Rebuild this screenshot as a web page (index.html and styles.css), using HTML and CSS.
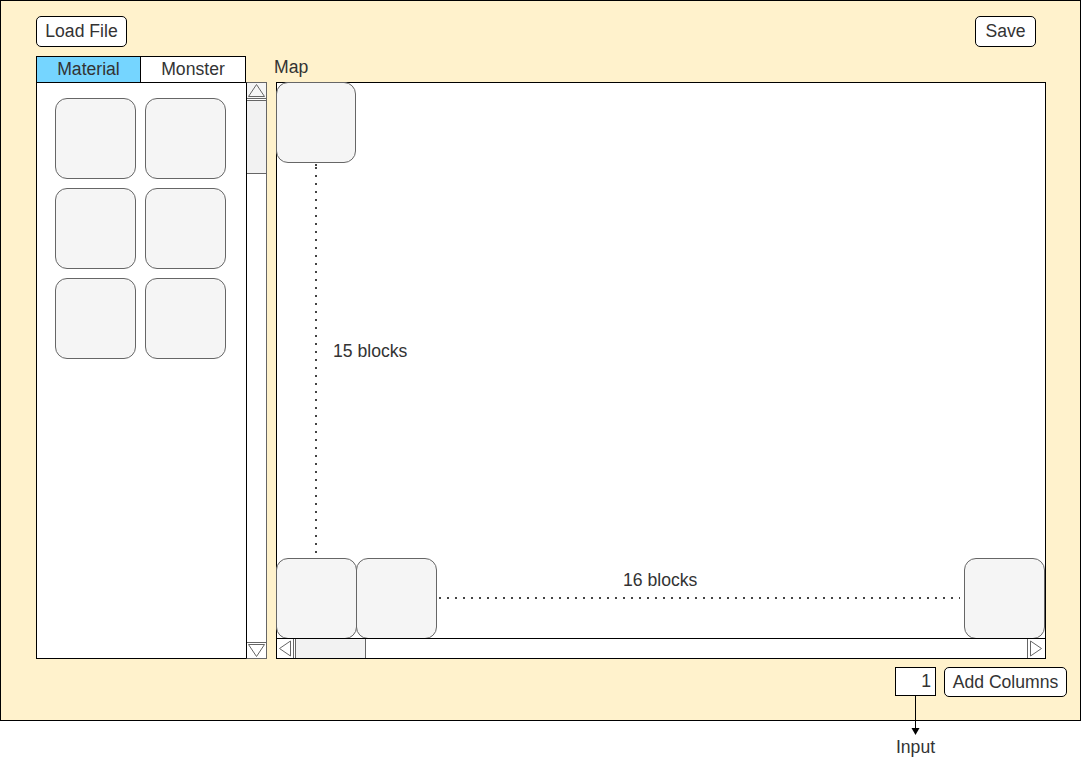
FILE: index.html
```html
<!DOCTYPE html>
<html>
<head>
<meta charset="utf-8">
<title>Map Editor</title>
<link rel="stylesheet" href="styles.css">
</head>
<body>
<div class="page">
<div class="frame">
  <div class="topbar">
    <button class="btn btn-load">Load File</button>
    <button class="btn btn-save">Save</button>
  </div>
  <div class="main">
    <div class="palette">
      <div class="tabs">
        <div class="tab active">Material</div>
        <div class="tab">Monster</div>
      </div>
      <div class="palette-body">
        <div class="tiles">
          <div class="tile"></div>
          <div class="tile"></div>
          <div class="tile"></div>
          <div class="tile"></div>
          <div class="tile"></div>
          <div class="tile"></div>
        </div>
        <div class="vscroll">
          <div class="sb-box sb-up">
            <svg width="19" height="15" viewBox="0 0 19 15"><polygon points="1.5,13.5 17.5,13.5 9.5,1.5" fill="none" stroke="#666" stroke-width="1"/></svg>
          </div>
          <div class="vthumb"></div>
          <div class="vtrack"></div>
          <div class="sb-box sb-down">
            <svg width="19" height="15" viewBox="0 0 19 15"><polygon points="1.5,1.5 17.5,1.5 9.5,13.5" fill="none" stroke="#666" stroke-width="1"/></svg>
          </div>
        </div>
      </div>
    </div>
    <div class="map-col">
      <div class="map-label">Map</div>
      <div class="map">
        <div class="tile map-top"></div>
        <div class="vspan">
          <div class="vdots"></div>
          <div class="vlabel">15 blocks</div>
        </div>
        <div class="brow">
          <div class="tile"></div>
          <div class="tile tile-second"></div>
          <div class="hspan">
            <div class="hlabel">16 blocks</div>
            <div class="hdots"></div>
          </div>
          <div class="tile"></div>
        </div>
        <div class="hscroll">
          <div class="hs-box hs-left">
            <svg width="16" height="18" viewBox="0 0 16 18"><polygon points="13.5,2 13.5,17 2.5,9.5" fill="none" stroke="#666" stroke-width="1"/></svg>
          </div>
          <div class="hthumb"></div>
          <div class="htrack"></div>
          <div class="hs-box hs-right">
            <svg width="16" height="18" viewBox="0 0 16 18"><polygon points="2.5,2 2.5,17 13.5,9.5" fill="none" stroke="#666" stroke-width="1"/></svg>
          </div>
        </div>
      </div>
    </div>
  </div>
  <div class="bottombar">
    <div class="input-box">
      <span class="num">1</span>
      <div class="annot">
        <svg class="annot-arrow" width="11" height="39" viewBox="0 0 11 39"><line x1="5.5" y1="0" x2="5.5" y2="33" stroke="#000" stroke-width="1"/><polygon points="1.5,32 9.5,32 5.5,39" fill="#000"/></svg>
        <div class="annot-label">Input</div>
      </div>
    </div>
    <button class="btn btn-add">Add Columns</button>
  </div>
</div>
</div>
</body>
</html>
```

FILE: styles.css
```css
html, body {
  margin: 0;
  padding: 0;
  background: #ffffff;
}

body {
  font-family: "Liberation Sans", Arial, Helvetica, sans-serif;
  font-size: 17.6px;
  color: #333333;
}

.page {
  position: relative;
  width: 1081px;
  height: 758px;
}

.frame {
  width: 1081px;
  height: 721px;
  box-sizing: border-box;
  border: 1px solid #000;
  background: #fff2cc;
  padding: 15px 0 0 35px;
  display: flex;
  flex-direction: column;
}

.topbar {
  display: flex;
  justify-content: space-between;
  padding-right: 44px;
}

.btn {
  box-sizing: border-box;
  height: 31px;
  border: 1px solid #000;
  border-radius: 5px;
  background: #fff;
  font: inherit;
  color: #333;
  padding: 0;
  line-height: 29px;
  text-align: center;
}

.btn-load { width: 91px; }
.btn-save { width: 61px; }
.btn-add { width: 123px; height: 30px; line-height: 28px; }

.main {
  display: flex;
  margin-top: 9px;
}

.palette {
  width: 231px;
  display: flex;
  flex-direction: column;
}

.tabs {
  display: flex;
  width: 210px;
  height: 27px;
  box-sizing: border-box;
  border: 1px solid #000;
  background: #fff;
}

.tab {
  flex: 1;
  text-align: center;
  line-height: 25px;
}

.tab.active {
  flex: none;
  width: 103px;
  background: #75d5ff;
  border-right: 1px solid #000;
}

.palette-body {
  display: flex;
  margin-top: -1px;
  height: 577px;
}

.tiles {
  width: 211px;
  box-sizing: border-box;
  border: 1px solid #000;
  background: #fff;
  padding: 15px 0 0 18px;
  display: grid;
  grid-template-columns: 81px 81px;
  grid-auto-rows: 81px;
  gap: 9px;
  align-content: start;
}

.tile {
  box-sizing: border-box;
  width: 81px;
  height: 81px;
  border: 1px solid #666;
  border-radius: 12px;
  background: #f5f5f5;
  flex: none;
}

.vscroll {
  width: 21px;
  margin-left: -1px;
  box-sizing: border-box;
  border: 1px solid #666;
  border-left-color: #000;
  background: #fff;
  display: flex;
  flex-direction: column;
}

.sb-box {
  height: 15px;
  display: flex;
  flex: none;
}

.sb-up {
  background: #f5f5f5;
  border-bottom: 1px solid #666;
}

.sb-down {
  border-top: 1px solid #666;
}

.vthumb {
  height: 72px;
  flex: none;
  margin-top: 1px;
  border-top: 1px solid #666;
  border-bottom: 1px solid #666;
  background: #f2f2f2;
}

.vtrack {
  flex: 1;
}

.map-col {
  margin-left: 9px;
  display: flex;
  flex-direction: column;
}

.map-label {
  height: 26px;
  line-height: 22px;
  margin-left: -2px;
}

.map {
  width: 770px;
  height: 577px;
  box-sizing: border-box;
  border: 1px solid #000;
  background: #fff;
  display: flex;
  flex-direction: column;
}

.map-top {
  width: 80px;
  margin: -1px 0 0 -1px;
}

.vspan {
  flex: 1;
  display: flex;
}

.vdots {
  width: 2px;
  margin-left: 38px;
  background: repeating-linear-gradient(to bottom, #444 0 2px, transparent 2px 8px);
  background-position: 0 4px;
}

.vlabel {
  margin-left: 16px;
  margin-top: 178px;
  line-height: 20px;
  align-self: flex-start;
}

.brow {
  display: flex;
  margin-left: -1px;
  height: 81px;
  flex: none;
}

.tile-second {
  margin-left: -1px;
}

.hspan {
  flex: 1;
  display: flex;
  flex-direction: column;
  padding-top: 12px;
}

.hlabel {
  line-height: 20px;
  margin-left: 186px;
}

.hdots {
  height: 2px;
  margin: 7px 4px 0 2px;
  background: repeating-linear-gradient(to right, #444 0 2px, transparent 2px 8px);
}

.hscroll {
  display: flex;
  height: 20px;
  flex: none;
  margin-top: -1px;
  box-sizing: border-box;
  border-top: 1px solid #000;
}

.hs-box {
  width: 16px;
  display: flex;
  flex: none;
}

.hs-left {
  border-right: 1px solid #666;
}

.hs-right {
  border-left: 1px solid #666;
  margin-right: 1px;
}

.hthumb {
  width: 69px;
  flex: none;
  margin-left: 1px;
  border-left: 1px solid #666;
  border-right: 1px solid #666;
  background: #f2f2f2;
}

.htrack {
  flex: 1;
}

.bottombar {
  display: flex;
  justify-content: flex-end;
  align-items: flex-start;
  gap: 8px;
  margin-top: 8px;
  padding-right: 13px;
}

.input-box {
  position: relative;
  box-sizing: border-box;
  width: 41px;
  height: 29px;
  border: 1px solid #000;
  background: #fff;
  text-align: right;
  padding-right: 4px;
  line-height: 27px;
}

.annot {
  position: absolute;
  top: 28px;
  left: 50%;
  width: 60px;
  margin-left: -30px;
  display: flex;
  flex-direction: column;
  align-items: center;
  z-index: 2;
}

.annot-arrow {
  display: block;
  flex: none;
}

.annot-label {
  margin-top: 2px;
  line-height: 20px;
  text-align: center;
  color: #333;
}
```
